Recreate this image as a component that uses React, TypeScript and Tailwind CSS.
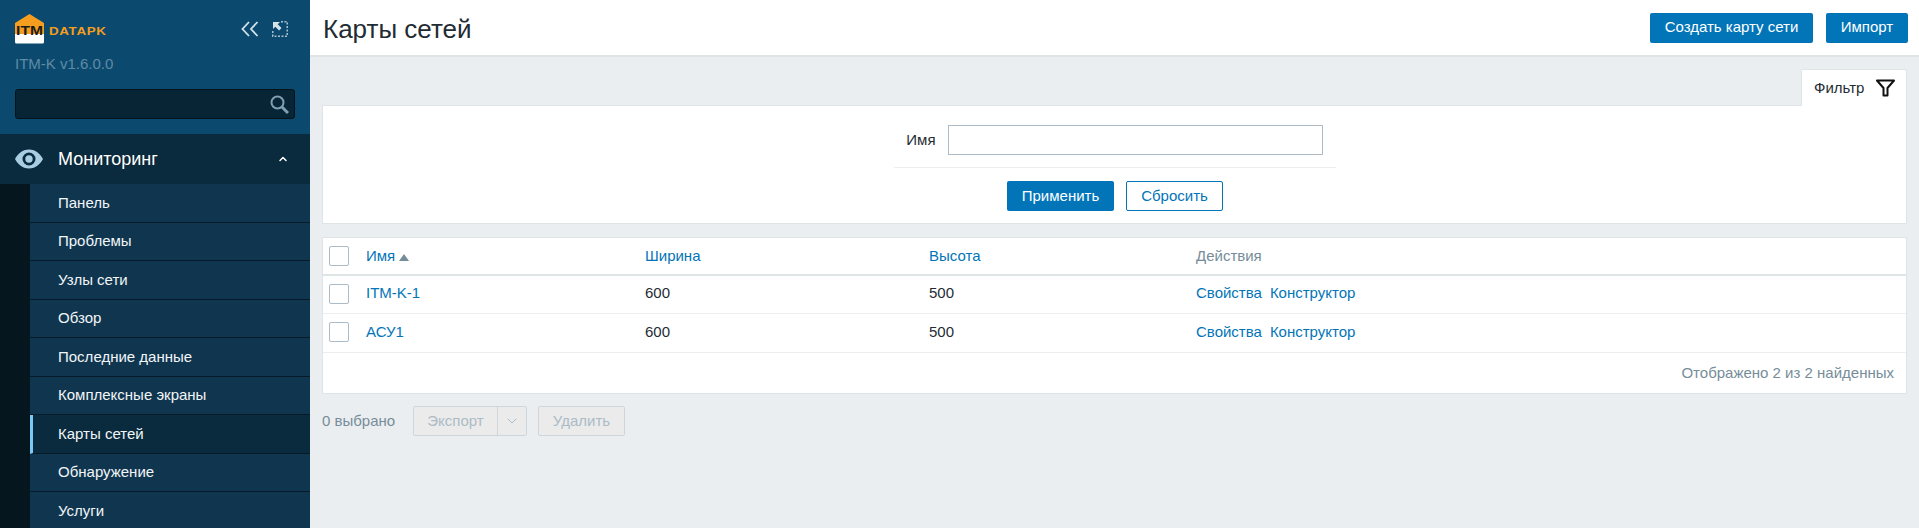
import { ChevronUp, ChevronDown } from "lucide-react";

const menuItems = [
  "Панель",
  "Проблемы",
  "Узлы сети",
  "Обзор",
  "Последние данные",
  "Комплексные экраны",
  "Карты сетей",
  "Обнаружение",
  "Услуги",
];

const maps = [
  { name: "ITM-K-1", width: 600, height: 500 },
  { name: "АСУ1", width: 600, height: 500 },
];

function Logo() {
  return (
    <div className="flex items-center gap-[5px]">
      <div className="relative w-[29px] h-[30px]">
        <svg width="29" height="30" viewBox="0 0 29 30" className="absolute inset-0">
          <path d="M0 9 L14.500 0 L29 9 V20 H0 Z" fill="#f59d1e" />
          <path d="M0 20 H29 V28 Q29 29.500 27.500 29.500 H1.500 Q0 29.500 0 28 Z" fill="#ffffff" />
        </svg>
        <span className="absolute left-0 right-0 top-[10px] text-center text-[13px] leading-[14px] font-bold text-[#1a1a1a] scale-x-[1.2]">
          ITM
        </span>
      </div>
      <span className="text-[11px] leading-[10px] font-bold text-[#f59d1e] tracking-[0.5px] scale-x-[1.22] origin-left mt-[3px]">
        DATAPK
      </span>
    </div>
  );
}

function Sidebar() {
  return (
    <aside className="w-[310px] shrink-0 h-full bg-[#0b4a6e] flex flex-col">
      <div className="h-[134px] shrink-0 px-[15px] pt-[14px]">
        <div className="flex justify-between h-[30px]">
          <Logo />
          <div className="flex items-start gap-[13px] pt-[7px] pr-[7px]">
            <svg width="18" height="16" viewBox="0 0 18 16" fill="none" stroke="#d5e2ea" strokeWidth="1.800">
              <path d="M8 1 L1.500 8 L8 15" />
              <path d="M16.500 1 L10 8 L16.500 15" />
            </svg>
            <svg width="16" height="16" viewBox="0 0 16 16" fill="none">
              <path d="M9 0.750 H15.250 V15.250 H0.750 V9" stroke="#a9bfcd" strokeWidth="1.500" strokeDasharray="2 1.500" />
              <path d="M1 1 H8 L5.700 3.300 L9.500 7.100 L7.100 9.500 L3.300 5.700 L1 8 Z" fill="#d5e2ea" />
            </svg>
          </div>
        </div>
        <div className="mt-[10px] text-[15px] leading-[20px] text-[#5f8aa6]">ITM-K v1.6.0.0</div>
        <div className="mt-[15px] h-[30px] w-[280px] bg-[#082536] border border-[#04131c] rounded-[3px] flex items-center justify-end pr-[5px]">
          <svg width="19" height="19" viewBox="0 0 19 19" fill="none" stroke="#7f9fb2">
            <circle cx="7.500" cy="7.500" r="6" strokeWidth="2" />
            <path d="M12 12 L18 18" strokeWidth="3" />
          </svg>
        </div>
      </div>
      <div className="h-[50px] shrink-0 bg-[#0a2a3d] flex items-center pl-[15px] pr-[21px]">
        <svg width="28" height="20" viewBox="0 0 28 20">
          <path
            fillRule="evenodd"
            fill="#a9cde3"
            d="M14 0.500 C21 0.500 25.500 5.500 28 10 C25.500 14.500 21 19.500 14 19.500 C7 19.500 2.500 14.500 0 10 C2.500 5.500 7 0.500 14 0.500 Z M14 3.500 A6.500 6.500 0 1 0 14 16.500 A6.500 6.500 0 1 0 14 3.500 Z M14 6.300 A3.700 3.700 0 1 1 14 13.700 A3.700 3.700 0 1 1 14 6.300 Z"
          />
        </svg>
        <span className="ml-[15px] text-[18px] text-white flex-1">Мониторинг</span>
        <ChevronUp size={12} strokeWidth={3} className="text-white" />
      </div>
      <div className="flex-1 bg-[#05161f] pl-[30px] overflow-hidden">
        {menuItems.map((item) => {
          const active = item === "Карты сетей";
          return (
            <div
              key={item}
              className={`h-[38.5px] flex items-center text-[15px] text-[#f2f6f8] border-b border-[#061a27] ${
                active ? "bg-[#0a2a3d] border-l-[3px] border-l-[#7cc8f5] pl-[25px]" : "bg-[#10354f] pl-[28px]"
              }`}
            >
              {item}
            </div>
          );
        })}
      </div>
    </aside>
  );
}

function Btn({ children, className = "" }: any) {
  return (
    <button className={`h-[30px] rounded-[2px] bg-[#0275b8] text-white text-[15px] ${className}`}>
      {children}
    </button>
  );
}

function Checkbox() {
  return <div className="w-[20px] h-[20px] bg-white border border-[#acbbc6] rounded-[2px]" />;
}

function TableRow({ map, className }: any) {
  return (
    <div className={`grid grid-cols-[43px_279px_284px_267px_1fr] items-center pb-[2px] border-b border-[#ebeef0] text-[15px] text-[#1f2c33] ${className}`}>
      <div className="pl-[6px]">
        <Checkbox />
      </div>
      <a className="text-[#0275b8]">{map.name}</a>
      <div>{map.width}</div>
      <div>{map.height}</div>
      <div className="flex gap-[8px] text-[#0275b8]">
        <a>Свойства</a>
        <a>Конструктор</a>
      </div>
    </div>
  );
}

export default function App() {
  return (
    <div
      className="flex w-full h-[528px] overflow-hidden bg-[#ebeef0]"
      style={{ fontFamily: '"Liberation Sans", Arial, sans-serif' }}
    >
      <Sidebar />
      <main className="flex-1 min-w-0 flex flex-col">
        <header className="h-[57px] shrink-0 bg-white border-b-2 border-[#dfe4e7] flex items-center justify-between pl-[13px] pr-[11px]">
          <h1 className="text-[26px] pt-[3px] text-[#1f2c33] font-normal">Карты сетей</h1>
          <div className="flex gap-[13px]">
            <Btn className="w-[163px]">Создать карту сети</Btn>
            <Btn className="w-[82px]">Импорт</Btn>
          </div>
        </header>
        <div className="px-[12px] pt-[12px]">
          <div className="flex justify-end">
            <div className="w-[106px] h-[37px] bg-white border-t border-l border-r border-[#dfe4e7] rounded-t-[2px] flex items-center pl-[12px] gap-[12px] text-[15px] text-[#1f2c33] -mb-px relative">
              Фильтр
              <svg width="19" height="18" viewBox="0 0 19 18" fill="none" stroke="#111" strokeWidth="2" strokeLinejoin="round">
                <path d="M1 1.500 H18 L11.500 9 V16.500 H7.500 V9 Z" />
              </svg>
            </div>
          </div>
          <section className="h-[119px] bg-white border border-[#dfe4e7] flex flex-col items-center">
            <div className="w-[442px] h-[62px] pt-[7px] border-b border-[#ebeef0] flex items-center justify-end pr-[13px] gap-[12px] text-[15px] text-[#1f2c33]">
              <label>Имя</label>
              <input className="w-[375px] h-[30px] bg-white border border-[#acbbc6] outline-none" />
            </div>
            <div className="flex gap-[12px] mt-[13px] ml-[1px]">
              <Btn className="w-[107px]">Применить</Btn>
              <button className="w-[97px] h-[30px] rounded-[2px] bg-white border border-[#0275b8] text-[#0275b8] text-[15px]">
                Сбросить
              </button>
            </div>
          </section>
          <section className="mt-[13px] h-[157px] bg-white border border-[#dfe4e7]">
            <div className="grid grid-cols-[43px_279px_284px_267px_1fr] items-center h-[38px] border-b-2 border-[#dfe4e7] text-[15px]">
              <div className="pl-[6px]">
                <Checkbox />
              </div>
              <div className="flex items-center gap-[4px] text-[#0275b8]">
                Имя
                <span className="w-0 h-0 border-l-[5px] border-r-[5px] border-b-[7px] border-l-transparent border-r-transparent border-b-[#768d99] mt-[2px]" />
              </div>
              <div className="text-[#0275b8]">Ширина</div>
              <div className="text-[#0275b8]">Высота</div>
              <div className="text-[#768d99]">Действия</div>
            </div>
            {maps.map((map, i) => (
              <TableRow key={map.name} map={map} className={i === 0 ? "h-[38px]" : "h-[39px]"} />
            ))}
            <div className="h-[40px] flex items-center justify-end pr-[12px] text-[15px] text-[#768d99]">
              Отображено 2 из 2 найденных
            </div>
          </section>
          <div className="mt-[12px] flex items-center text-[15px]">
            <span className="text-[#768d99] w-[91px]">0 выбрано</span>
            <div className="flex h-[30px] w-[114px] bg-[#ebebeb] border border-[#cfd6db] rounded-[2px] text-[#acbbc6]">
              <span className="w-[84px] flex items-center justify-center border-r border-[#cfd6db]">Экспорт</span>
              <span className="flex-1 flex items-center justify-center">
                <ChevronDown size={16} strokeWidth={1.500} />
              </span>
            </div>
            <div className="ml-[11px] h-[30px] w-[87px] bg-[#ebebeb] border border-[#cfd6db] rounded-[2px] text-[#acbbc6] flex items-center justify-center">
              Удалить
            </div>
          </div>
        </div>
      </main>
    </div>
  );
}
